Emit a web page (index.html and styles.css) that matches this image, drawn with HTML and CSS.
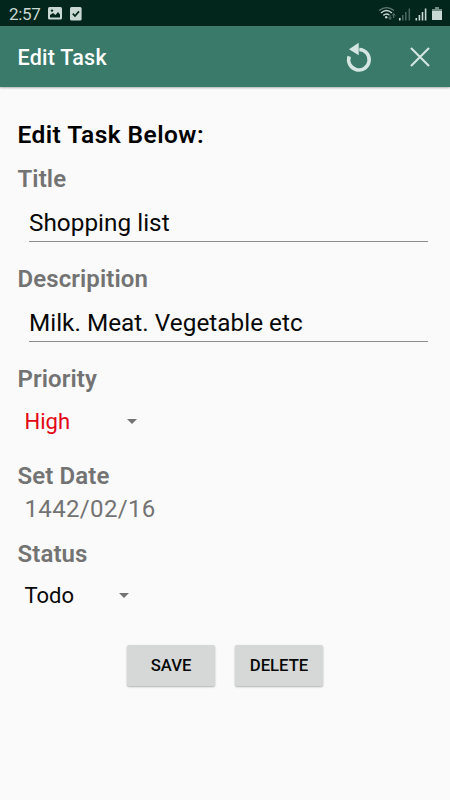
FILE: index.html
```html
<!DOCTYPE html>
<html lang="en">
<head>
<meta charset="utf-8">
<title>Edit Task</title>
<link rel="stylesheet" href="styles.css">
</head>
<body>
<div class="status-bar">
  <span class="clock">2:57</span>
  <svg class="picture" width="14" height="13" viewBox="0 0 14 13"><rect width="14" height="12.6" rx="1.5" fill="#c9d8d3"/><path d="M2 10.5V8l3-2 2.5 2L10 5l2 2.5v3z" fill="#02251c"/><circle cx="4" cy="3.6" r="1.2" fill="#02251c"/></svg>
  <svg class="check" width="12" height="14" viewBox="0 0 12 14"><rect width="11.6" height="13.6" rx="1.5" fill="#c9d8d3"/><path d="M2.8 6.6l2.2 2.4 4-4.6" fill="none" stroke="#02251c" stroke-width="1.7"/></svg>
  <svg class="signals" width="66" height="16" viewBox="0 0 66 16">
    <g fill="none" stroke-width="1.4"><path d="M1 4.5Q8.5-1.3 16 4.5" stroke="#5f7a72"/><path d="M3 7Q8.5 2.2 14 7M5.3 9.4Q8.500 6.800 11.300 9" stroke="#c9d8d3"/></g>
    <circle cx="8.2" cy="11.2" r="1.2" fill="#c9d8d3"/>
    <path d="M12 9v3.500M10.500 11.500l1.500 2 1.500-2M15.700 12V8.500M14.200 9.500l1.500-2 1.500 2" fill="none" stroke="#5f7a72"/>
    <path d="M21 12h1.600v2.500H21zM37.500 12h1.600v2.500h-1.600zM40.600 9h1.600v5.500h-1.600zM43.700 6h1.600v8.500h-1.600zM46.800 2.500h1.600v12h-1.600z" fill="#c9d8d3"/>
    <path d="M24 9h1.600v5.500H24zM27 6h1.600v8.500H27zM30.500 2.500h1.600v12h-1.600z" fill="#48665d"/>
    <path d="M57 1h4v2h3v3H54V3h3z" fill="#718a82"/><path d="M54 5h10v9H54z" fill="#c9d8d3"/>
  </svg>
</div>
<header class="app-bar">
  <h1>Edit Task</h1>
  <svg class="undo" width="28" height="32" viewBox="0 0 28 32"><path d="M4.200 15.300A10.300 10.300 0 1 0 14.300 8.400" fill="none" stroke="#d5e6e2" stroke-width="3.500"/><path d="M4 8.300L13.700 1.700v12.600z" fill="#d5e6e2"/></svg>
  <svg class="close" width="22" height="22" viewBox="0 0 22 22"><path d="M2 2l18 18M20 2L2 20" fill="none" stroke="#d5e6e2" stroke-width="2.100"/></svg>
</header>
<main class="form">
  <h2>Edit Task Below:</h2>
  <div class="label title-label">Title</div>
  <div class="field">Shopping list</div>
  <div class="label">Descripition</div>
  <div class="field">Milk. Meat. Vegetable etc</div>
  <div class="label">Priority</div>
  <div class="spinner priority"><span>High</span><i class="caret"></i></div>
  <div class="label">Set Date</div>
  <div class="date">1442/02/16</div>
  <div class="label">Status</div>
  <div class="spinner status"><span>Todo</span><i class="caret"></i></div>
  <div class="actions"><button>SAVE</button><button>DELETE</button></div>
</main>
</body>
</html>
```
FILE: styles.css
```css
* { box-sizing: border-box; }
body {
  margin: 0;
  height: 800px;
  overflow: hidden;
  background: #fafafa;
  font-family: Roboto, "Liberation Sans", sans-serif;
}
h1, h2 { margin: 0; }
.status-bar {
  height: 26px;
  background: #02251c;
  display: flex;
  align-items: center;
  padding: 1px 7px 0 9px;
}
.clock { color: #c9d8d3; font-size: 17px; line-height: 24px; width: 39px; letter-spacing: -.3px; }
.check { margin-left: 8px; }
.signals { margin-left: auto; margin-right: -1px; width: 66px; }
.app-bar {
  height: 61px;
  background: #3a7a6b;
  display: flex;
  align-items: center;
  padding: 0 19.500px 0 17.500px;
  box-shadow: 0 1px 2px rgba(0, 0, 0, .3);
}
.app-bar h1 { color: #fff; font-size: 21.500px; font-weight: 500; letter-spacing: .25px; flex: 1; padding-top: 1px; }
.undo { margin-right: 36px; }
.form { padding: 34px 22px 0 17.500px; }
.form h2 { font-size: 24.500px; font-weight: 600; letter-spacing: .45px; line-height: 28px; color: #000; }
.label { font-size: 24px; line-height: 28px; font-weight: 600; letter-spacing: .1px; color: #737373; }
.title-label { margin-top: 16px; }
.field {
  height: 49px;
  margin: 0 0 23px 11.500px;
  padding-top: 16px;
  border-bottom: 1px solid #8c8c8c;
  font-size: 24.300px;
  letter-spacing: .03px;
  line-height: 28px;
  color: #080808;
}
.spinner {
  display: flex;
  align-items: center;
  justify-content: space-between;
  height: 28px;
  padding-left: 7px;
  font-size: 22px;
  line-height: 28px;
}
.spinner span { padding-top: 2px; }
.priority { width: 119px; margin: 14px 0 27px; color: #e30613; }
.status { width: 111px; margin-top: 13px; color: #080808; }
.caret {
  border: 5.500px solid transparent;
  border-top-color: #737373;
  border-bottom: 0;
}
.date { margin: 5px 0 17px; padding-left: 7px; font-size: 24px; letter-spacing: .35px; line-height: 28px; color: #737373; }
.actions { display: flex; gap: 20px; margin: 36px 0 0 109.500px; }
button {
  width: 88px;
  height: 41px;
  padding: 0;
  border: 0;
  border-radius: 2px;
  background: #d6d8d7;
  box-shadow: 0 1px 2px rgba(0, 0, 0, .3);
  color: #080808;
  font: 500 16.700px/41px Roboto, "Liberation Sans", sans-serif;
}
```
